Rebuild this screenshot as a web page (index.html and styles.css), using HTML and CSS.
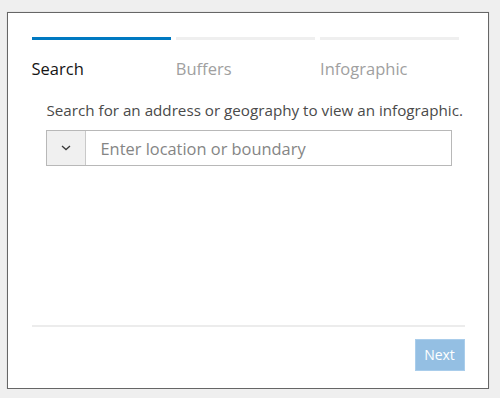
FILE: index.html
```html
<!DOCTYPE html>
<html>
<head>
<meta charset="utf-8">
<link rel="stylesheet" href="styles.css">
</head>
<body>
<div class="frame">
  <div class="tabs">
    <div class="tab active"><span class="tab-label">Search</span></div>
    <div class="tab"><span class="tab-label">Buffers</span></div>
    <div class="tab"><span class="tab-label">Infographic</span></div>
  </div>
  <div class="panel">
    <p class="desc">Search for an address or geography to view an infographic.</p>
    <div class="search">
      <button class="drop" type="button">
        <svg width="10" height="6" viewBox="0 0 10 6"><path d="M1 1 L5 4.6 L9 1" fill="none" stroke="#3a3a3a" stroke-width="1.3"/></svg>
      </button>
      <div class="field">Enter location or boundary</div>
    </div>
  </div>
  <div class="footer">
    <button class="next" type="button">Next</button>
  </div>
</div>
</body>
</html>
```

FILE: styles.css
```css
html, body {
  margin: 0;
  padding: 0;
  background: #efefef;
}
body {
  font-family: "Open Sans", "Noto Sans", sans-serif;
}
.frame {
  box-sizing: border-box;
  margin: 12px 0 0 7px;
  width: 482px;
  height: 377px;
  background: #fff;
  border: 1.5px solid #666;
  box-shadow: 0 0 1px rgba(0,0,0,0.2);
  padding: 23.5px 23.5px 17.5px 23.5px;
  display: flex;
  flex-direction: column;
}
.tabs {
  display: grid;
  grid-template-columns: repeat(3, 139.3px);
  column-gap: 5px;
}
.tab {
  border-top: 3px solid #efefef;
  padding-top: 19px;
}
.tab.active {
  border-top-color: #0079c1;
}
.tab-label {
  display: block;
  font-size: 16.5px;
  line-height: 20px;
  color: #a0a0a0;
}
.tab.active .tab-label {
  color: #151515;
}
.panel {
  padding: 0 12px 0 14px;
}
.desc {
  margin: 21.2px 0 0 1px;
  font-size: 15.2px;
  line-height: 20px;
  color: #4a4a4a;
  white-space: nowrap;
}
.search {
  margin-top: 10.8px;
  box-sizing: border-box;
  height: 36px;
  width: 406px;
  border: 1px solid #b8b8b8;
  display: flex;
}
.drop {
  box-sizing: border-box;
  width: 39px;
  height: 100%;
  margin: 0;
  padding: 0;
  border: 0;
  border-right: 1px solid #c9c9c9;
  background: #f0f0f0;
  display: flex;
  align-items: center;
  justify-content: center;
}
.field {
  flex: 1;
  display: flex;
  align-items: center;
  padding-left: 15px;
  font-size: 16.4px;
  color: #858585;
}
.footer {
  margin-top: auto;
  border-top: 2px solid #ececec;
  display: flex;
  justify-content: flex-end;
  padding-top: 12px;
}
.next {
  box-sizing: border-box;
  width: 50px;
  height: 32px;
  margin: 0;
  padding: 0;
  border: 1px solid #a9cdeb;
  background: #94bfe3;
  color: #fff;
  font-family: "Open Sans", "Noto Sans", sans-serif;
  font-size: 14px;
}
```
